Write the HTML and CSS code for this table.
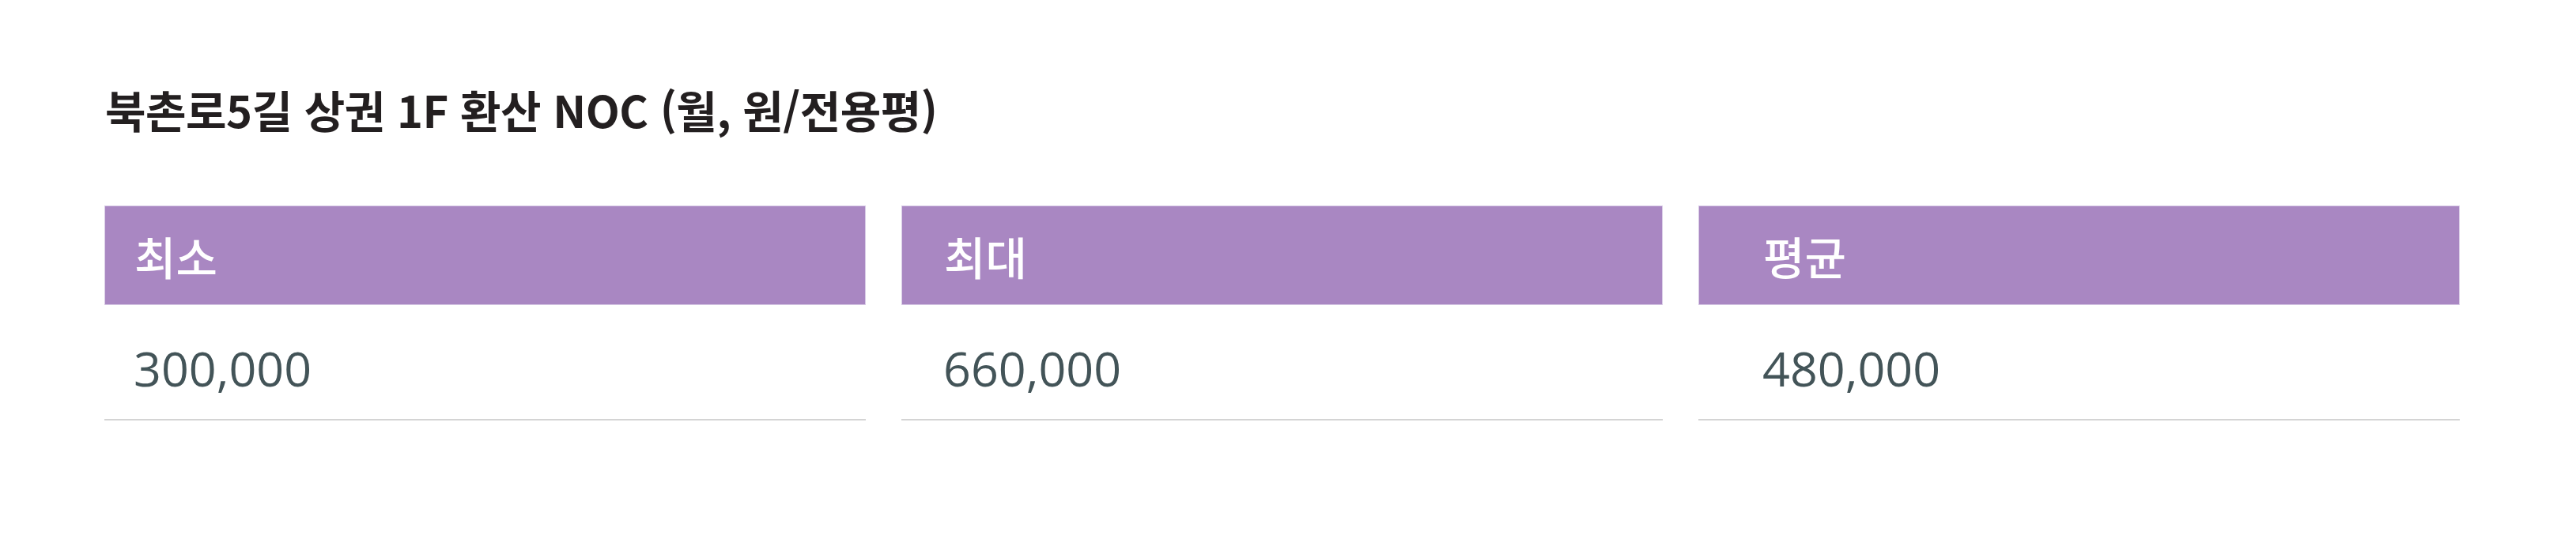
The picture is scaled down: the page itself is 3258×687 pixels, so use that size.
FILE: index.html
```html
<!DOCTYPE html>
<html lang="ko">
<head>
<meta charset="utf-8">
<link rel="stylesheet" href="styles.css">
</head>
<body>
<div class="page">
  <h1 class="title">북촌로5길 상권 1F 환산 NOC (월, 원/전용평)</h1>
  <div class="stats">
    <div class="stat s1">
      <div class="stat-head">최소</div>
      <div class="stat-value">300,000</div>
    </div>
    <div class="stat s2">
      <div class="stat-head">최대</div>
      <div class="stat-value">660,000</div>
    </div>
    <div class="stat s3">
      <div class="stat-head">평균</div>
      <div class="stat-value">480,000</div>
    </div>
  </div>
</div>
</body>
</html>
```
FILE: styles.css
```css
html, body {
  margin: 0;
  padding: 0;
  background: #ffffff;
}
.page {
  padding: 96px 147px 0 132px;
}
.title {
  margin: 0 0 0 1px;
  font-family: "Noto Sans CJK KR", "Noto Sans", sans-serif;
  font-weight: 700;
  font-size: 56px;
  line-height: 84px;
  color: #231f20;
  letter-spacing: -0.5px;
}
.stats {
  margin-top: 80px;
  display: grid;
  grid-template-columns: repeat(3, 963px);
  column-gap: 45px;
}
.stat-head {
  height: 124px;
  background: #a987c2;
  border: 1px solid #d9cce6;
  color: #ffffff;
  font-family: "Noto Sans CJK KR", sans-serif;
  font-weight: 500;
  font-size: 57px;
  display: flex;
  align-items: center;
}
.stat-value {
  box-sizing: border-box;
  height: 146px;
  border-bottom: 2px solid #d4d4d4;
  display: flex;
  align-items: center;
  font-family: "Open Sans", "Noto Sans", sans-serif;
  font-size: 61px;
  color: #435458;
  padding-top: 14px;
}
.s1 .stat-head, .s1 .stat-value { padding-left: 37px; }
.s2 .stat-head, .s2 .stat-value { padding-left: 53px; }
.s3 .stat-head, .s3 .stat-value { padding-left: 81px; }
```
